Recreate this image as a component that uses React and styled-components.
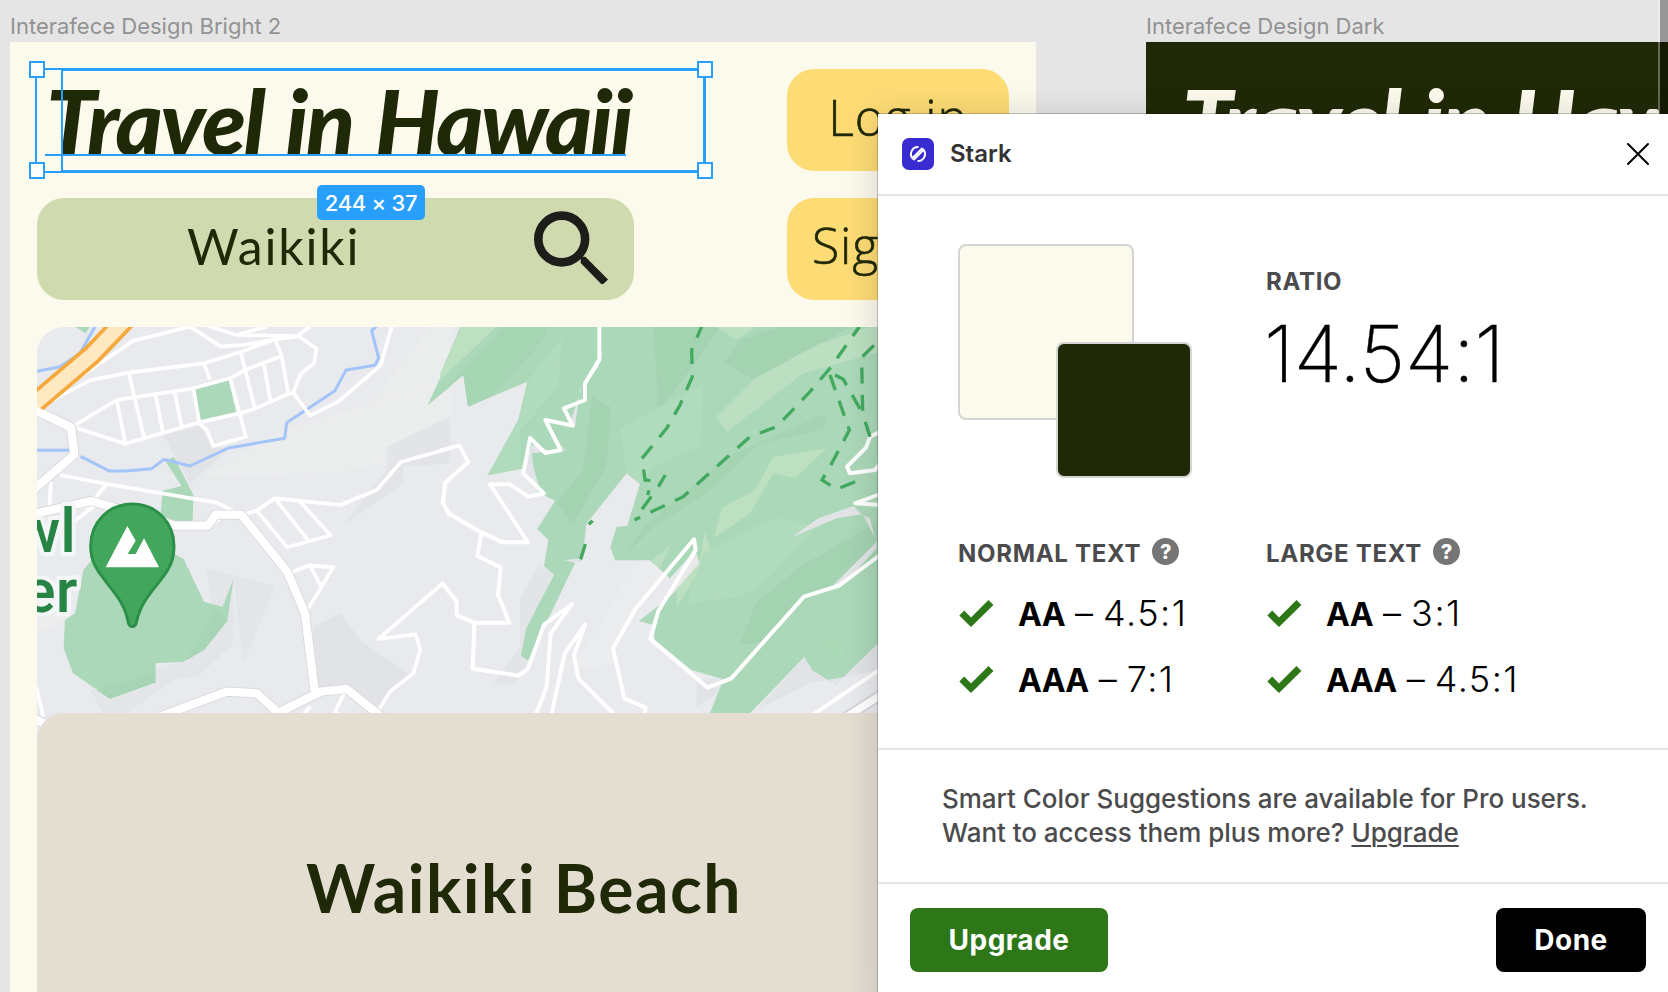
import React from "react";
import styled, { createGlobalStyle } from "styled-components";

const GlobalStyle = createGlobalStyle`
  * { box-sizing: border-box; }
  html, body { margin: 0; padding: 0; overflow: hidden; }
  body { font-family: Inter, "Liberation Sans", sans-serif; }
`;

const ink = "#202907";
const blue = "#28a0fb";

const Canvas = styled.main`
  position: relative;
  width: 1668px;
  height: 992px;
  overflow: hidden;
  background: #e5e5e5;
`;

const FrameNode = styled.section`
  position: absolute;
  left: ${(p) => p.$x}px;
  top: 12px;
  width: ${(p) => p.$w}px;
`;

const FrameLabel = styled.div`
  height: 30px;
  font-size: 22px;
  line-height: 28px;
  color: #929292;
  white-space: nowrap;
`;

const Artboard = styled.div`
  height: 950px;
  padding: 27px 27px 0;
  overflow: hidden;
  background: ${(p) => (p.$dark ? ink : "#fcfaed")};
  color: ${(p) => (p.$dark ? "#fcfaed" : ink)};
`;

const TopGrid = styled.div`
  display: grid;
  grid-template-columns: 597px 222px;
  grid-template-rows: 101.5px 101.5px;
  justify-content: space-between;
  row-gap: 27.5px;
  margin-bottom: 27.5px;
`;

const BrandTitle = styled.h1`
  margin: 0;
  padding-left: 9px;
  font-family: Lato, "Liberation Sans", sans-serif;
  font-style: italic;
  font-weight: 900;
  font-size: 90px;
  line-height: 102px;
  letter-spacing: -2.2px;
  word-spacing: 5px;
  white-space: nowrap;
`;

const SearchBox = styled.div`
  display: flex;
  align-items: center;
  justify-content: space-between;
  padding: 0 26px 4px 150px;
  border-radius: 27px;
  background: #cfdaae;
`;

const SearchText = styled.span`
  padding-bottom: 2px;
  font-family: Lato, sans-serif;
  font-weight: 400;
  font-size: 50px;
  line-height: 60px;
  letter-spacing: 1.8px;
  white-space: nowrap;
`;

const ButtonText = styled.span`
  font-family: "Open Sans", sans-serif;
  font-weight: 300;
  font-size: 50px;
  line-height: 60px;
  letter-spacing: 0.8px;
  -webkit-text-stroke: 0.6px ${ink};
  padding-bottom: ${(p) => p.$lift}px;
  white-space: nowrap;
`;

const PillButton = styled.div`
  display: flex;
  align-items: center;
  justify-content: center;
  border-radius: 27px;
  background: #fddc76;
`;

const MapBox = styled.div`
  height: 413px;
  width: 972px;
  border-radius: 27px 27px 0 0;
  overflow: hidden;
  background: #e8eaed;
  svg { display: block; }
`;

const PlaceCard = styled.div`
  position: relative;
  height: 400px;
  margin-top: -27px;
  padding: 136px 0 0 269px;
  border-radius: 27px 27px 0 0;
  background: #e4ddd2;
`;

const PlaceName = styled.h2`
  margin: 0;
  font-family: Lato, sans-serif;
  font-weight: 700;
  font-size: 66px;
  line-height: 78px;
  letter-spacing: 1.5px;
  white-space: nowrap;
`;

const Selection = styled.div`
  position: absolute;
  left: 35px;
  top: 67.5px;
  width: 671px;
  height: 105px;
  border: 2px solid ${blue};
`;

const InnerBounds = styled.div`
  position: absolute;
  left: 24px;
  top: -2px;
  right: -2px;
  bottom: -2px;
  border: 3px solid ${blue};
  border-left-width: 2px;
`;

const Baseline = styled.div`
  position: absolute;
  left: 8px;
  top: 84px;
  width: 581px;
  height: 2px;
  background: ${blue};
`;

const Handle = styled.span`
  position: absolute;
  width: 16px;
  height: 17px;
  background: #fff;
  border: 2px solid ${blue};
  ${(p) => (p.$right ? "right: -9px;" : "left: -8px;")}
  ${(p) => (p.$bottom ? "bottom: -8px;" : "top: -9px;")}
`;

const SizeBadge = styled.div`
  position: absolute;
  left: 317px;
  top: 185px;
  width: 108px;
  height: 35px;
  border-radius: 5px;
  background: ${blue};
  color: #fff;
  font-weight: 500;
  font-size: 22px;
  line-height: 36px;
  letter-spacing: -0.3px;
  text-align: center;
  white-space: nowrap;
`;

const EdgeStrip = styled.div`
  position: absolute;
  right: 0;
  top: 0;
  width: 10px;
  height: 114px;
  border-left: 2px solid rgba(255, 255, 255, 0.3);
  background: rgba(0, 0, 0, 0.34);
  background-clip: padding-box;
`;

const Panel = styled.aside`
  position: absolute;
  left: 878px;
  top: 114px;
  width: 800px;
  height: 890px;
  padding-right: 10px;
  background: #fff;
  box-shadow: 0 0 0 1px rgba(0, 0, 0, 0.2), 0 4px 34px rgba(0, 0, 0, 0.16);
`;

const PanelHeader = styled.header`
  display: flex;
  align-items: center;
  height: 82px;
  padding: 0 18px 0 24px;
  border-bottom: 2px solid #e5e5e5;
`;

const PanelTitle = styled.div`
  flex: 1;
  margin-left: 16px;
  font-weight: 600;
  font-size: 24px;
  line-height: 30px;
  color: #333;
`;

const Results = styled.div`
  display: grid;
  grid-template-columns: 308px 1fr;
  grid-template-rows: 234px auto;
  row-gap: 62px;
  height: 554px;
  padding: 48px 0 0 80px;
  border-bottom: 2px solid #e5e5e5;
`;

const Swatches = styled.div`
  display: grid;
  width: 234px;
  height: 234px;
`;

const Swatch = styled.div`
  grid-area: 1 / 1;
  width: ${(p) => p.$size}px;
  height: ${(p) => p.$size}px;
  border: 2px solid #d4d4d4;
  border-radius: 8px;
  background: ${(p) => p.$color};
  ${(p) => p.$front && "place-self: end;"}
`;

const Caption = styled.div`
  display: flex;
  align-items: center;
  gap: 11px;
  font-weight: 700;
  font-size: 24px;
  line-height: 28px;
  letter-spacing: 0.7px;
  color: #4b4b4d;
  white-space: nowrap;
`;

const RatioBlock = styled.div`
  padding-top: 24px;
`;

const RatioValue = styled.div`
  margin: 17px 0 0 -2px;
  font-weight: 200;
  font-size: 79px;
  line-height: 80px;
  letter-spacing: -0.3px;
  -webkit-text-stroke: 0.4px #000;
  color: #000;
`;

const LevelGroup = styled.div`
  display: flex;
  flex-direction: column;
`;

const LevelRow = styled.div`
  display: flex;
  align-items: center;
  height: 40px;
  margin-top: 26px;
  font-weight: 300;
  font-size: 36px;
  line-height: 40px;
  color: #000;
  white-space: pre;
  svg { margin: -1px 24px 0 1px; }
`;

const Grade = styled.b`
  font-weight: 700;
  font-size: 32px;
  letter-spacing: -0.7px;
`;

const Threshold = styled.span`
  letter-spacing: 1.5px;
`;

const HelpBadge = styled.span`
  display: flex;
  width: 27px;
  height: 27px;
  margin-top: -5px;
  align-items: center;
  justify-content: center;
  border-radius: 50%;
  background: #757575;
  color: #fff;
  font-weight: 800;
  font-size: 20px;
  letter-spacing: 0;
`;

const ProNote = styled.p`
  height: 134px;
  margin: 0;
  padding: 32px 0 0 64px;
  border-bottom: 2px solid #e5e5e5;
  font-weight: 500;
  font-size: 26px;
  line-height: 34px;
  letter-spacing: -0.03px;
  color: #4b4b4d;
  white-space: nowrap;
`;

const UpgradeLink = styled.span`
  text-decoration: underline;
  text-decoration-thickness: 2px;
  text-underline-offset: 3px;
`;

const PanelFooter = styled.footer`
  display: flex;
  justify-content: space-between;
  padding: 24px 22px 0 32px;
`;

const ActionButton = styled.button`
  width: ${(p) => p.$w}px;
  height: 64px;
  padding: 0;
  border: 0;
  border-radius: 8px;
  background: ${(p) => p.$bg};
  color: #fff;
  font-family: inherit;
  font-weight: 700;
  font-size: 28px;
  line-height: 64px;
  letter-spacing: 0.5px;
`;

const SearchIcon = () => (
  <svg width="74" height="74" viewBox="0 0 74 74" fill="none" stroke="#1d1d19">
    <circle cx="27.7" cy="29" r="23.4" strokeWidth="8.6" />
    <path d="M46.7 47 L51.4 46.8 L74 69.5 L68.2 75 L46.7 53 Z" fill="#1d1d19" stroke="none" />
  </svg>
);

const StarkLogo = () => (
  <svg width="32" height="32" viewBox="0 0 32 32" fill="none">
    <rect width="32" height="32" rx="7" fill="#382bd0" />
    <g stroke="#fff" strokeWidth="2">
      <path d="M16.5 9 A7 7 0 0 0 10.4 20.2 L20.6 10" />
      <path d="M15.5 23 A7 7 0 0 0 21.6 11.8 L11.4 22" />
    </g>
  </svg>
);

const CloseIcon = () => (
  <svg width="24" height="24" viewBox="0 0 24 24" stroke="#000" strokeWidth="2" strokeLinecap="round">
    <path d="M2 2 L22 22 M22 2 L2 22" />
  </svg>
);

const CheckIcon = () => (
  <svg width="35" height="27" viewBox="0 0 35 27" fill="#2d7718">
    <path d="M0.3 15.5 L5.2 10.6 L12 17.4 L29.5 0 L34.4 5 L12 27 Z" />
  </svg>
);

const poly = (d, fill) => <path key={d} d={d} fill={fill} />;

const WestTerrain = () => (
  <g transform="translate(0 320) scale(0.33333)">
    {poly("M1350 0 L1290 20 L1050 330 L1100 370 L1350 200Z", "#ebecec")}
    {poly("M850 330 L1350 180 L1350 390 L1000 460 L610 470Z", "#ebecec")}
    {poly("M490 345 L600 315 L640 380 L690 385 L570 490Z", "#e1e3e6")}
    {poly("M1160 380 L1350 290 L1350 430 L1210 440 L1210 490 L1030 615 L1090 540 L1160 450Z", "#e2e4e8")}
    {poly("M940 920 L1020 880 L1090 970 L1225 1060 L1140 1165 L1040 1100 L955 1100Z", "#e1e3e6")}
    {poly("M620 745 L825 800 L730 1030 L700 770 L700 970 L600 1065 L520 1080 L380 1180 L310 1180 L270 1110 L560 1020 L640 900Z", "#e3e5e8")}
    {poly("M110 905 L190 850 L190 900 L110 940Z", "#ecedec")}
    {poly("M585 202 L686 178 L708 276 L600 300Z", "#abd8b8")}
    {poly("M495 422 L522 411 L580 525 L578 603 L480 603 L488 512 L545 498Z", "#abd8b8")}
    {poly("M225 20 L270 20 L257 40Z", "#abd8b8")}
    {poly("M250 750 L300 690 L525 703 L551 717 L612 845 L668 860 L700 778 L682 902 L612 990 L550 1025 L467 1030 L467 1087 L330 1136 L219 1060 L191 985 L195 900 L225 880Z", "#abd8b8")}
    {poly("M650 865 L682 902 L612 990 L560 1020Z M460 1060 L467 1087 L330 1136 L290 1110Z", "#a6d4b4")}
    {poly("M1350 110 L1283 256 L1350 200Z", "#abd8b8")}
    <g fill="none" stroke="#a2c4f8" strokeWidth="9" strokeLinejoin="round">
      <path d="M110 154 L180 140 L240 100 L285 20" />
      <path d="M110 391 L210 391 M242 409 L328 453 L375 453 L455 446 L492 418 L570 438 L685 384 L854 355 L860 308 L1005 212 L1038 150 L1124 136 L1136 115 L1115 32 L1130 18" />
    </g>
    <g fill="none" stroke="#fff" strokeWidth="11" strokeLinejoin="round">
      <path d="M160 240 L272 180 L386 158 L612 130 L722 96 L825 58 L890 50 L930 20 M240 170 L400 62 L570 20 L662 79 L730 75 L825 58 M625 18 L710 45 L895 48 L950 86 L942 130 L902 162 L880 218 L930 287 L1015 245 L1142 136 L1175 20 M710 45 L800 20" />
      <path d="M232 325 L376 371 L595 308 L720 280 L765 266 L865 222 L880 218 M225 315 L350 240 L580 205 L690 175 L735 150 L845 108 M386 158 L432 352 M350 240 L376 371 M466 220 L488 335 M523 212 L545 320 M580 205 L598 308 M612 130 L630 180 M690 175 L738 350 L640 378 L620 330 L595 308 M722 96 L765 266 M792 135 L812 246 M825 58 L845 108 L865 222" />
      <path d="M180 465 L320 492 L650 548 L695 570 L640 610 M320 492 L285 535 M153 485 L148 560 L280 560 L220 605" />
      <path d="M735 582 L770 572 L825 535 L1020 555 L1130 510 L1203 426 L1350 385 M770 572 L862 682 L992 646 L900 545 M825 535 L925 662 M870 758 L930 736 L1000 742 L925 865 M930 736 L963 800" />
      <path d="M1350 480 L1335 488 L1330 550 L1350 590 M1350 820 L1328 790 L1135 957 L1247 943 L1261 990 L1240 1060 L1170 1115 L1130 1180 M930 1160 L905 1190 M1035 1115 L1005 1175 L1020 1185 M108 1100 L130 1190" />
    </g>
    {["#d5d7db", "#fff"].map((c, i) => (
      <g key={c} fill="none" stroke={c} strokeWidth={i ? 25 : 30} strokeLinejoin="round">
        <path d="M100 268 L213 322 L223 403 L100 510 M100 582 L274 543 L400 580 L525 617 L623 617 L647 584 L724 584 L862 755 L915 880 L944 1112" />
        <path d="M480 1190 L680 1115 L770 1120 L835 1178 L965 1114 L1040 1107 L1150 1195 M100 1195 L150 1220" />
      </g>
    ))}
    <path d="M75 275 L275 105 L385 -10" fill="none" stroke="#f5a83b" strokeWidth="64" />
    <path d="M75 275 L275 105 L385 -10" fill="none" stroke="#fde8c2" strokeWidth="42" />
    <path d="M100 268 L213 322" fill="none" stroke="#fff" strokeWidth="24" />
    <g fill="#268545" stroke="#f3f5f6" strokeWidth="26" strokeLinejoin="round" paintOrder="stroke" fontFamily="Roboto, sans-serif" fontWeight="500" fontSize="184" textAnchor="end">
      <text x="228" y="696">wl</text>
      <text x="232" y="877">er</text>
    </g>
    <path d="M397 552 C325 552 272 608 272 678 C272 725 290 750 320 788 C355 832 375 858 384 904 C387 925 407 925 410 904 C420 858 440 832 476 788 C506 750 522 725 522 678 C522 608 469 552 397 552Z" fill="#42a75c" stroke="#2d9049" strokeWidth="9" />
    <path d="M317 742 L382 618 L407 662 L383 702 L407 702 L432 655 L477 742Z" fill="#fff" />
  </g>
);

const EastTerrain = () => (
  <g transform="translate(440 320) scale(0.33333)">
    {poly("M0 225 L70 165 L84 260 L262 185 L235 300 L143 466 L245 446 L300 520 L345 542 L292 627 L325 660 L312 738 L342 764 L258 925 L242 1008 L264 1022 L405 730 L425 720 L440 610 L560 460 L600 492 L562 617 L530 620 L511 682 L525 721 L630 721 L690 775 L766 690 L777 725 L690 830 L597 903 L640 915 L645 960 L755 1050 L850 1078 L810 1180 L930 1180 L1092 1012 L1118 1052 L1187 1094 L1320 965 L1320 10 L66 10 L-5 175Z", "#abd8b8")}
    {poly("M70 10 L180 10 L0 180 L0 165Z", "#bce0c0")}
    {poly("M200 10 L330 10 L310 60 L160 225 L84 260 L70 165 L20 200Z", "#a6d5b4")}
    {poly("M367 50 L355 200 L240 330 L245 446 L143 466 L235 300 L262 185Z", "#b1dbbd")}
    {poly("M640 10 L850 10 L720 190 L655 270Z", "#a4d3b2")}
    {poly("M900 60 L1050 10 L1250 10 L950 180 L850 130Z", "#a4d3b2")}
    {poly("M455 230 L512 260 L500 440 L400 610 L350 545 L430 450Z", "#a4d3b2")}
    {poly("M540 325 L790 190 L780 380 L640 440 L600 492 L560 460Z", "#b0dbbc")}
    {poly("M830 290 L945 175 L1130 75 L1320 10 L1320 95 L1090 160 L860 335Z", "#bbdfc0")}
    {poly("M825 18 L950 18 L890 60Z M690 675 L630 725 L660 745Z", "#bbdfc0")}
    {poly("M610 620 L860 410 L1160 280 L1150 330 L960 370 L800 520 L640 620 L560 700Z", "#a5d4b3")}
    {poly("M1000 410 L1160 385 L1065 475 L1000 460 L930 580 L822 655 L845 565 L945 510Z", "#bce0c0")}
    {poly("M795 630 L812 700 L710 860 L710 810 L780 720Z", "#bce0c0")}
    {poly("M740 850 L790 700 L1010 590 L1130 620 L980 780 L900 830Z", "#b1dbbd")}
    {poly("M1320 600 L1150 700 L1080 740 L945 850 L900 975 L970 965 L1110 825 L1200 800 L1320 700Z", "#a4d3b2")}
    {poly("M1135 962 L1227 962 L1192 1040Z", "#abdab9")}
    {poly("M475 110 L490 90 L475 140 L420 210 L405 320 L390 310 L430 190Z", "#e4e5e8")}
    {poly("M275 375 L350 400 L376 390 L320 345 L380 390 L275 400 L280 440 L300 510 L250 455Z", "#e1e3e6")}
    {poly("M1055 652 L1135 595 L1240 558 L1265 583 L1190 595Z M1180 795 L1310 665 L1310 685 L1210 795Z M1270 585 L1290 595 L1305 655Z", "#e1e3e6")}
    {poly("M760 690 L778 730 L700 820 L650 860Z", "#e9e9e9")}
    {poly("M240 830 L300 735 L342 764 L258 925 L242 1008 L264 1022 L230 1090 L160 1090 L240 980Z", "#e2e4e8")}
    {poly("M630 722 L680 770 L590 860 L520 980 L535 1030 L330 1060 L440 980 L580 740Z", "#ebecee")}
    {poly("M372 720 L425 715 L410 730Z M770 1080 L850 1078 L830 1120 L770 1160Z M1092 1012 L1118 1052 L1187 1094 L1320 965 L1320 1050 L1110 1090 L950 1170Z", "#e1e3e7")}
    <g fill="none" stroke="#fff" strokeWidth="12" strokeLinejoin="round">
      <path d="M478 15 L478 120 L435 190 L435 240 L372 265 L398 317 L316 300 L362 390 L316 399 L270 354 L250 460 L312 520 L265 530 L210 493 L150 493 L264 667 L188 667 L120 635 L30 583 L8 550 L16 488 L85 426 L58 377 L0 392" />
      <path d="M124 640 L112 708 L182 742 L174 825 L208 908 L103 908 L50 886 L50 845 L8 790 L0 800 M103 908 L98 1046 L236 1067 L264 1046 L312 914 L396 852 L332 940 L320 1100 L285 1190 M333 1190 L374 1000 L436 913 L402 1005 L415 1075 L525 1185" />
      <path d="M612 1190 L617 1163 L553 1135 L519 985 L587 866 L762 658 L767 690 L655 873 L631 957 L803 1103 L874 1075 L1092 830 L1197 797 L1320 705 M1320 335 L1290 350 L1278 383 L1221 440 L1230 460 L1305 450 L1320 430 M1320 522 L1246 550 L1320 555 M1110 1190 L1320 1048" />
    </g>
    <path d="M1205 1200 L1330 1120" stroke="#d5d7db" strokeWidth="34" />
    <path d="M1205 1200 L1330 1120" stroke="#fff" strokeWidth="22" />
    <g fill="none" stroke="#42a95f" strokeWidth="10" strokeDasharray="48 34">
      <path d="M785 20 L755 90 L757 170 L720 255 L680 325 L606 415 L615 480 L635 482 L623 525" strokeDashoffset="12" />
      <path d="M1258 20 L1170 145 L1110 215 L1010 320 L930 350 L830 440 L730 530 L583 600" strokeDashoffset="14" />
      <path d="M1170 165 L1228 330 L1170 440 L1146 480 L1190 508 L1258 480" />
      <path d="M1185 165 L1210 178 L1262 270 M1302 76 L1265 112 L1268 280 L1290 350 M606 568 L635 528 M655 500 L676 465 M446 613 L458 602 M422 718 L440 660" />
    </g>
  </g>
);

const TerrainMap = () => (
  <MapBox>
    <svg width="972" height="413" viewBox="37 327 972 413">
      <WestTerrain />
      <svg x="440" y="320" width="600" height="430" viewBox="440 320 600 430">
        <EastTerrain />
      </svg>
    </svg>
  </MapBox>
);

const Level = ({ grade, ratio }) => (
  <LevelRow>
    <CheckIcon />
    <span><Grade>{grade}</Grade> – <Threshold>{ratio}</Threshold></span>
  </LevelRow>
);

const Levels = ({ title, aa, aaa }) => (
  <LevelGroup>
    <Caption>{title}<HelpBadge>?</HelpBadge></Caption>
    <Level grade="AA" ratio={aa} />
    <Level grade="AAA" ratio={aaa} />
  </LevelGroup>
);

export default function App() {
  return (
    <Canvas>
      <GlobalStyle />
      <FrameNode $x={10} $w={1026}>
        <FrameLabel>Interafece Design Bright 2</FrameLabel>
        <Artboard>
          <TopGrid>
            <BrandTitle>Travel in Hawaii</BrandTitle>
            <PillButton><ButtonText $lift={5}>Log in</ButtonText></PillButton>
            <SearchBox><SearchText>Waikiki</SearchText><SearchIcon /></SearchBox>
            <PillButton><ButtonText $lift={7}>Sign up</ButtonText></PillButton>
          </TopGrid>
          <TerrainMap />
          <PlaceCard><PlaceName>Waikiki Beach</PlaceName></PlaceCard>
        </Artboard>
      </FrameNode>

      <FrameNode $x={1146} $w={1026}>
        <FrameLabel>Interafece Design Dark</FrameLabel>
        <Artboard $dark><BrandTitle>Travel in Hawaii</BrandTitle></Artboard>
      </FrameNode>

      <Selection>
        <InnerBounds />
        <Baseline />
        <Handle />
        <Handle $right />
        <Handle $bottom />
        <Handle $right $bottom />
      </Selection>
      <SizeBadge>244 × 37</SizeBadge>
      <EdgeStrip />

      <Panel>
        <PanelHeader>
          <StarkLogo />
          <PanelTitle>Stark</PanelTitle>
          <CloseIcon />
        </PanelHeader>
        <Results>
          <Swatches>
            <Swatch $size={176} $color="#fcfaed" />
            <Swatch $size={136} $color={ink} $front />
          </Swatches>
          <RatioBlock>
            <Caption>RATIO</Caption>
            <RatioValue>14.54:1</RatioValue>
          </RatioBlock>
          <Levels title="NORMAL TEXT" aa="4.5:1" aaa="7:1" />
          <Levels title="LARGE TEXT" aa="3:1" aaa="4.5:1" />
        </Results>
        <ProNote>
          Smart Color Suggestions are available for Pro users.<br />
          Want to access them plus more? <UpgradeLink>Upgrade</UpgradeLink>
        </ProNote>
        <PanelFooter>
          <ActionButton $w={198} $bg="#2d7718">Upgrade</ActionButton>
          <ActionButton $w={150} $bg="#000">Done</ActionButton>
        </PanelFooter>
      </Panel>
    </Canvas>
  );
}
